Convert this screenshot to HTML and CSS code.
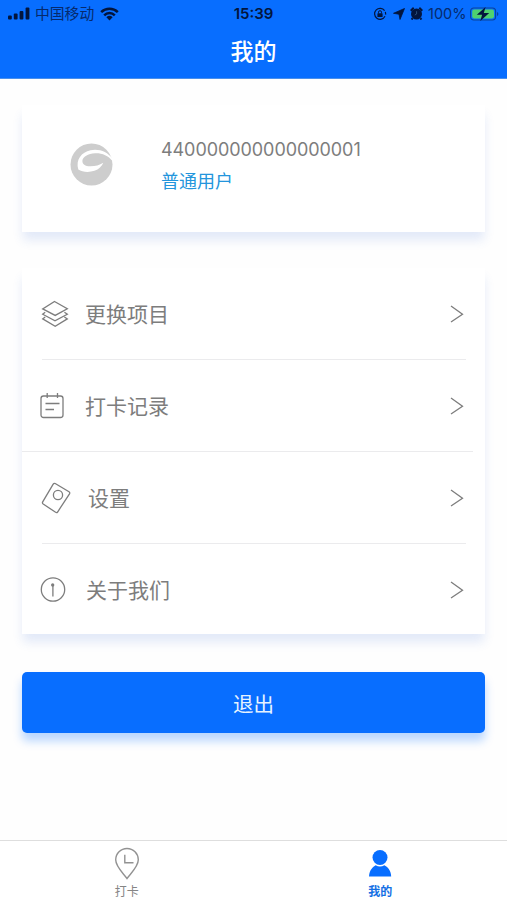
FILE: index.html
```html
<!DOCTYPE html>
<html lang="zh-CN">
<head>
  <meta charset="UTF-8">
  <meta name="viewport" content="width=device-width, initial-scale=1">
  <title>我的</title>
  <link rel="stylesheet" href="styles.css">
</head>
<body>
  <header class="header">
    <div class="status">
      <div class="status-left">
        <svg class="signal" width="23" height="13" viewBox="0 0 23 13">
          <rect x="0" y="8.5" width="3.8" height="4" rx="1"/>
          <rect x="5.8" y="6.5" width="3.8" height="6" rx="1"/>
          <rect x="11.6" y="4" width="3.8" height="8.5" rx="1"/>
          <rect x="17.6" y="0.5" width="3.8" height="12" rx="1"/>
        </svg>
        <span class="carrier">中国移动</span>
        <svg class="wifi" width="19" height="14" viewBox="0 0 19 14">
          <path d="M1.2 5.2a11.8 11.8 0 0 1 16.6 0M4.2 8.3a7.5 7.5 0 0 1 10.6 0" fill="none" stroke="#03153d" stroke-width="2.5"/>
          <path d="M9.5 13.4 6.4 10.3a4.5 4.5 0 0 1 6.2 0z"/>
        </svg>
      </div>
      <span class="time">15:39</span>
      <div class="status-right">
        <svg width="14" height="14" viewBox="0 0 14 14">
          <path d="M11.6 3.6A5.5 5.5 0 1 0 12 9.3M12.6 7.6a5.5 5.5 0 0 0-.3-2.7" fill="none" stroke="#03153d" stroke-width="1.2"/>
          <rect x="4.4" y="6.2" width="5.2" height="3.9" rx=".6"/>
          <path d="M5.5 6.4V5.2a1.5 1.5 0 0 1 3 0v1.2" fill="none" stroke="#03153d"/>
        </svg>
        <svg class="arrow" width="12" height="12" viewBox="0 0 12 12">
          <path d="M11.5.5 7 11.500 6 6.200.5 5.300z" stroke="#03153d" stroke-width=".8" stroke-linejoin="round"/>
        </svg>
        <svg class="alarm" width="13" height="13" viewBox="0 0 13 13">
          <circle cx="6.5" cy="7" r="5.5"/>
          <path d="M.7 3.7 3.7.8M12.3 3.7 9.3.8M2.6 11.2l-1 1.4M10.4 11.2l1 1.4" stroke="#03153d" stroke-width="2"/>
          <path d="M6.6 4.2V7L4.8 8" fill="none" stroke="#2f5580" stroke-width=".9"/>
        </svg>
        <span class="percent">100%</span>
        <svg class="battery" width="29" height="14" viewBox="0 0 29 14">
          <rect x=".6" y="1" width="25" height="12" rx="3.2" fill="none" stroke="#0a4299" stroke-width="1.1"/>
          <rect x="2.2" y="2.6" width="21.8" height="8.8" rx="1.8" fill="#4fd16f"/>
          <path d="M27 5v4q1.4-.6 1.4-2T27 5z" fill="#0a4299"/>
          <path d="M15.6 0 6.8 7.8h5.3L10.3 14l8.9-8h-5.4z"/>
        </svg>
      </div>
    </div>
    <h1 class="title">我的</h1>
  </header>

  <main class="content">
    <section class="card profile">
      <svg class="avatar" width="43" height="43" viewBox="0 0 43 43">
        <circle cx="21.5" cy="21.5" r="21" fill="#cdcdcd"/>
        <path d="M42.500 15.500C37.500 8.800 29 5.300 20.500 7.200C11.500 9.200 5.500 16.500 8.300 26.500C14 30.300 25 29.500 30 24.500C31.500 23 32.500 21.500 33.300 19.800C29.500 22.200 25.500 23.300 20.500 23.300C15 23.300 12.200 21 12.400 17.700C12.700 13.800 18 10.800 25 10.300C32 10 38 12.500 42.500 18z" fill="#fff"/>
      </svg>
      <div class="profile-info">
        <div class="account">440000000000000001</div>
        <div class="role">普通用户</div>
      </div>
    </section>

    <nav class="card menu">
      <a class="menu-item">
        <svg class="icon" width="28" height="28" viewBox="0 0 28 28">
          <path d="M12.500 1.500 25.300 8.700 13.200 15.400.7 8.900z"/>
          <path d="M3.200 12.300.7 14.200 13 20.800 25.300 14.200 22.400 12.300M3.200 17 .7 18.900 13.200 26.300 25.300 18.900 22.400 17"/>
        </svg>
        <span class="label narrow">更换项目</span>
        <svg class="chevron" width="14" height="18" viewBox="0 0 14 18"><path d="M1 1 12.500 9.200 1 17"/></svg>
      </a>
      <a class="menu-item wide">
        <svg class="icon" width="29" height="28" viewBox="0 0 29 28">
          <rect x="1" y="4" width="22" height="21.500" rx="2.500"/>
          <path d="M7.200 1v5M17.500 1v5M5.500 11.500h14M5.500 17.500h8.500"/>
        </svg>
        <span class="label">打卡记录</span>
        <svg class="chevron" width="14" height="18" viewBox="0 0 14 18"><path d="M1 1 12.500 9.200 1 17"/></svg>
      </a>
      <a class="menu-item">
        <svg class="icon" width="30" height="32" viewBox="2 0 30 32">
          <path d="M15.200 1.500 29 9.800q1.200.8.500 2L17.600 30q-.8 1-2 .3L3.200 22q-1.200-.9-.5-2.100L13.200 2.100q.8-1.200 2-.6z"/>
          <circle cx="18" cy="13" r="4.600"/>
        </svg>
        <span class="label">设置</span>
        <svg class="chevron" width="14" height="18" viewBox="0 0 14 18"><path d="M1 1 12.500 9.200 1 17"/></svg>
      </a>
      <a class="menu-item">
        <svg class="icon" width="28" height="28" viewBox="2.500 0 28 28">
          <circle cx="13.500" cy="13.500" r="11.700"/>
          <path d="M13.400 10V20.500"/>
          <circle cx="13.200" cy="9" r="1" fill="#7d7d7d"/>
        </svg>
        <span class="label">关于我们</span>
        <svg class="chevron" width="14" height="18" viewBox="0 0 14 18"><path d="M1 1 12.500 9.200 1 17"/></svg>
      </a>
    </nav>

    <button class="logout">退出</button>
  </main>

  <footer class="tabbar">
    <a class="tab">
      <svg width="26" height="34" viewBox="0 0 26 34">
        <path d="M13 31.500C8.500 25.500 1.700 19.500 1.700 12.800a11.300 11.300 0 0 1 22.600 0C24.300 19.500 17.500 25.500 13 31.500z" fill="none" stroke="#929292" stroke-width="1.400"/>
        <path d="M10.800 7.700v8.100h8.700" fill="none" stroke="#929292" stroke-width="1.400"/>
      </svg>
      <span>打卡</span>
    </a>
    <a class="tab active">
      <svg width="26" height="34" viewBox="0 0 26 34">
        <circle cx="13" cy="10.500" r="7.500"/>
        <path d="M2 29.500C2.500 22.700 6 20 8.600 18.300Q13 20.800 17.400 18.300C20.500 20.200 23.800 22.700 24.200 29.500z"/>
      </svg>
      <span>我的</span>
    </a>
  </footer>
</body>
</html>
```

FILE: styles.css
```css
* {
  box-sizing: border-box;
}
body {
  margin: 0;
  height: 900px;
  display: flex;
  flex-direction: column;
  background: #fefefe;
  font-family: Inter, "Noto Sans CJK SC", sans-serif;
  color: #7d7d7d;
  overflow: hidden;
}
svg {
  flex-shrink: 0;
}

/* header */
.header {
  height: 79px;
  background: #086eff;
  border-bottom: 1px solid #4a90ec;
}
.status {
  display: grid;
  grid-template-columns: 1fr auto 1fr;
  align-items: center;
  height: 27px;
  padding: 0 8px;
  font-size: 14px;
  line-height: 27px;
  color: #03153d;
  fill: #03153d;
}
.status-left,
.status-right {
  display: flex;
  align-items: center;
}
.status-right {
  justify-content: flex-end;
}
.carrier {
  margin: 2px 6px 0 4px;
  font-size: 14.8px;
  line-height: 25px;
  color: #062a6c;
}
.time {
  font-weight: 600;
  font-size: 15px;
}
.arrow {
  margin-left: 6px;
}
.alarm {
  margin: 0 5px;
}
.percent {
  width: 38px;
  margin-right: 4px;
  font-size: 14.5px;
  color: #062a6c;
}
.title {
  margin: 7px 0 0;
  font-size: 23px;
  line-height: 36px;
  font-weight: 500;
  text-align: center;
  color: #fff;
}

/* cards */
.content {
  flex: 1;
  padding: 26px 22px 0;
}
.card {
  background: #fff;
  box-shadow: 0 9px 10px -1px rgba(60, 105, 210, 0.14);
}
.profile {
  display: flex;
  height: 127px;
  padding: 0 48px;
}
.avatar {
  margin-top: 38px;
}
.profile-info {
  margin: 31px 0 0 48px;
}
.account {
  font-size: 18px;
  line-height: 28px;
  letter-spacing: -0.07px;
}
.role {
  margin-top: 4px;
  font-size: 18px;
  line-height: 28px;
  color: #2395dc;
}

/* menu */
.menu {
  margin-top: 36px;
  height: 366px;
}
.menu-item {
  display: flex;
  align-items: center;
  height: 92px;
  margin: 0 19px 0 20px;
  border-bottom: 1px solid #ebebed;
}
.menu-item.wide {
  margin: 0 12px 0 0;
  padding: 0 7px 0 18px;
}
.menu-item:last-child {
  border-bottom: none;
}
.icon,
.chevron {
  fill: none;
  stroke: #7d7d7d;
  stroke-width: 1.3;
}
.icon {
  overflow: visible;
}
.label {
  flex: 1;
  margin-left: 16px;
  padding-top: 2px;
  font-size: 21px;
  line-height: 30px;
}
.label.narrow {
  margin-left: 15px;
}
.chevron {
  margin-right: 2px;
}

.logout {
  display: block;
  width: 463px;
  height: 61px;
  margin-top: 38px;
  padding: 0;
  border: none;
  border-radius: 5px;
  background: #086eff;
  box-shadow: 0 8px 10px rgba(8, 110, 255, 0.28);
  font-family: inherit;
  font-size: 20.5px;
  color: #e6f3ff;
}

/* bottom tabs */
.tabbar {
  display: flex;
  height: 60px;
  border-top: 1px solid #dedede;
  background: #fff;
}
.tab {
  flex: 1;
  display: flex;
  flex-direction: column;
  align-items: center;
  padding-top: 6px;
  font-size: 12px;
  line-height: 21px;
  color: #858585;
}
.tab.active {
  color: #1470e4;
  fill: #086eff;
  font-weight: 700;
}
```
